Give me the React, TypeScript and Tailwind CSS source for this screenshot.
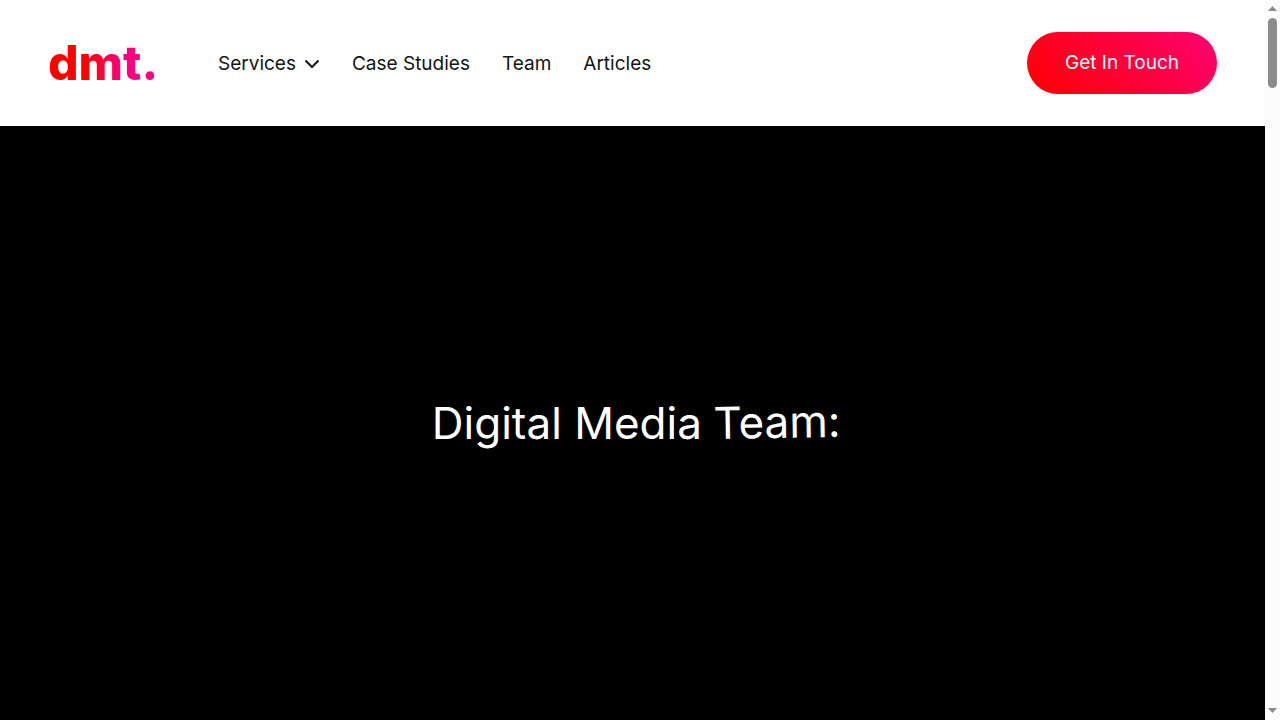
import React from "react";

const navLinks = ["Case Studies", "Team", "Articles"];

const Header: React.FC = () => (
  <header className="flex items-center justify-between bg-white px-12 py-8">
    <div className="flex items-center gap-16">
      <a
        href="#"
        aria-label="dmt home"
        className="w-[106px] bg-linear-to-r/srgb from-[#ff0000] from-35% to-[#ff0080] to-70% bg-clip-text text-[48px] leading-[62px] font-extrabold text-transparent"
      >
        dmt.
      </a>
      <nav className="flex items-center gap-8 pt-px text-[19px] leading-7 text-[#141414]">
        <button type="button" className="flex items-center gap-2">
          Services
          <svg
            className="h-4 w-4"
            viewBox="0 0 16 16"
            fill="none"
            stroke="currentColor"
            strokeWidth="2"
            aria-hidden="true"
          >
            <path d="M1.5 4.5 8 11 14.5 4.5" />
          </svg>
        </button>
        {navLinks.map((label) => (
          <a key={label} href="#">
            {label}
          </a>
        ))}
      </nav>
    </div>
    <a
      href="#"
      className="flex h-[62px] w-[190px] items-center justify-center rounded-full bg-linear-45/srgb from-[#ff0000] to-[#ff0073] text-[19px] text-white"
    >
      Get In Touch
    </a>
  </header>
);

const Hero: React.FC = () => (
  <main className="flex flex-1 items-center justify-center bg-black pl-2">
    <h1 className="text-[44px] leading-[60px] text-white">
      Digital Media{" "}
      <span className="inline-block origin-bottom-left -rotate-1">Team:</span>
    </h1>
  </main>
);

const ScrollRail: React.FC = () => (
  <div
    aria-hidden="true"
    className="flex w-[15px] shrink-0 flex-col items-center bg-[#fcfcfc]"
  >
    <svg className="h-[18px] w-[15px]" viewBox="0 0 15 18" fill="#8b8b8b">
      <path d="M7.5 6 12 11H3z" />
    </svg>
    <div className="h-[70px] w-[9px] rounded-full bg-[#8b8b8b]" />
    <svg className="mt-auto h-[18px] w-[15px]" viewBox="0 0 15 18" fill="#8b8b8b">
      <path d="M3 6h9L7.5 11z" />
    </svg>
  </div>
);

const App: React.FC = () => (
  <div className="flex min-h-screen font-['Inter',sans-serif]">
    <div className="flex flex-1 flex-col">
      <Header />
      <Hero />
    </div>
    <ScrollRail />
  </div>
);

export default App;
